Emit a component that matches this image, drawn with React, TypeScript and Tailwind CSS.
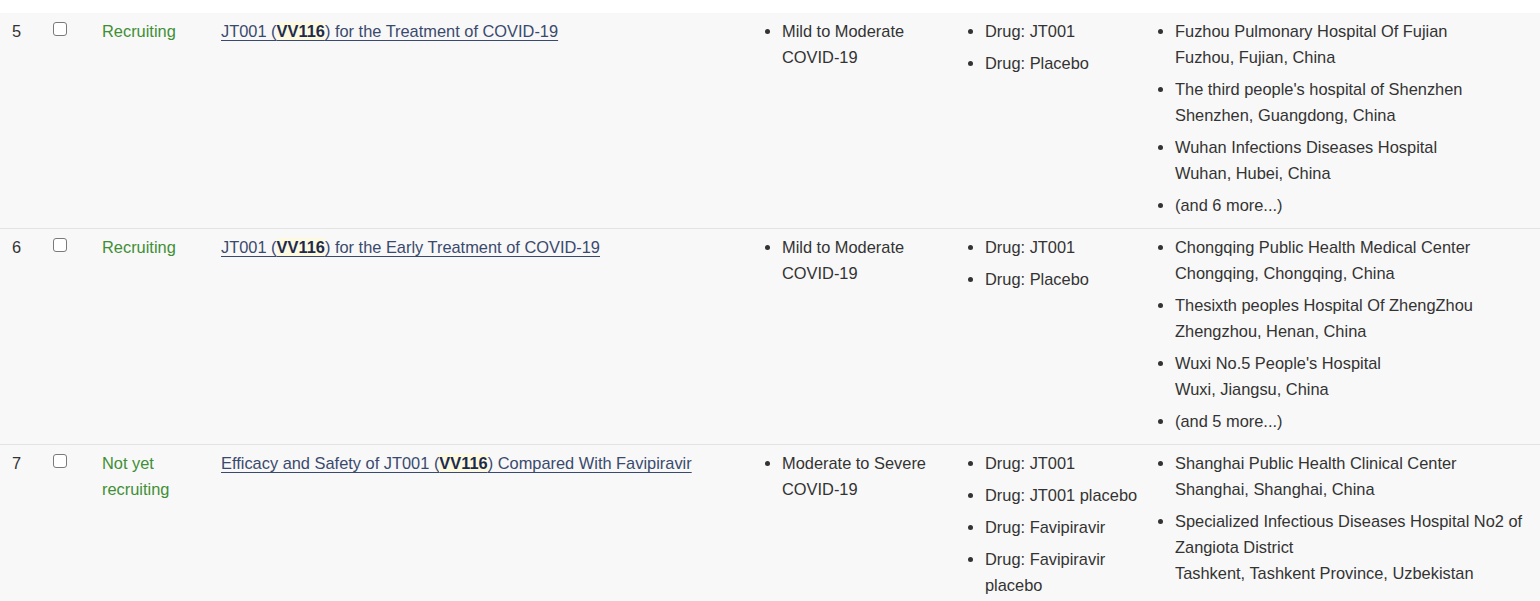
import React from "react";

interface Location {
  name: string;
  place?: string;
}

interface Study {
  num: number;
  status: string;
  before: string;
  after: string;
  conditions: string[];
  interventions: string[];
  locations: Location[];
}

const studies: Study[] = [
  {
    num: 5,
    status: "Recruiting",
    before: "JT001 (",
    after: ") for the Treatment of COVID-19",
    conditions: ["Mild to Moderate COVID-19"],
    interventions: ["Drug: JT001", "Drug: Placebo"],
    locations: [
      { name: "Fuzhou Pulmonary Hospital Of Fujian", place: "Fuzhou, Fujian, China" },
      { name: "The third people's hospital of Shenzhen", place: "Shenzhen, Guangdong, China" },
      { name: "Wuhan Infections Diseases Hospital", place: "Wuhan, Hubei, China" },
      { name: "(and 6 more...)" },
    ],
  },
  {
    num: 6,
    status: "Recruiting",
    before: "JT001 (",
    after: ") for the Early Treatment of COVID-19",
    conditions: ["Mild to Moderate COVID-19"],
    interventions: ["Drug: JT001", "Drug: Placebo"],
    locations: [
      { name: "Chongqing Public Health Medical Center", place: "Chongqing, Chongqing, China" },
      { name: "Thesixth peoples Hospital Of ZhengZhou", place: "Zhengzhou, Henan, China" },
      { name: "Wuxi No.5 People's Hospital", place: "Wuxi, Jiangsu, China" },
      { name: "(and 5 more...)" },
    ],
  },
  {
    num: 7,
    status: "Not yet recruiting",
    before: "Efficacy and Safety of JT001 (",
    after: ") Compared With Favipiravir",
    conditions: ["Moderate to Severe COVID-19"],
    interventions: ["Drug: JT001", "Drug: JT001 placebo", "Drug: Favipiravir", "Drug: Favipiravir placebo"],
    locations: [
      { name: "Shanghai Public Health Clinical Center", place: "Shanghai, Shanghai, China" },
      {
        name: "Specialized Infectious Diseases Hospital No2 of Zangiota District",
        place: "Tashkent, Tashkent Province, Uzbekistan",
      },
    ],
  },
];

const cell = "align-top pt-[5px] pb-[4px] leading-[26px]";

export default function App() {
  return (
    <div className="w-[1540px] bg-white font-['Liberation_Sans',Arial,sans-serif] text-[16.4px] text-[#333333]">
      <div className="h-[13px]" />
      <table className="w-[1540px] table-fixed border-collapse">
        <colgroup>
          <col className="w-[43px]" />
          <col className="w-[49px]" />
          <col className="w-[119px]" />
          <col className="w-[541px]" />
          <col className="w-[203px]" />
          <col className="w-[190px]" />
          <col className="w-[395px]" />
        </colgroup>
        <tbody>
          {studies.map((s) => (
            <tr key={s.num} className="bg-[#f8f8f8] border-b border-[#e3e3e3]">
              <td className={`${cell} pl-3`}>{s.num}</td>
              <td className={`${cell} pl-[10px]`}>
                <span className="mt-[4px] block h-[14px] w-[14px] rounded-[3px] border border-[#7a7a7a] bg-white" />
              </td>
              <td className={`${cell} pl-[10px] pr-2 text-[#3f8f36]`}>{s.status}</td>
              <td className={`${cell} pl-[10px] pr-2`}>
                <a href="#" className="text-[#3a4a6e] underline decoration-[#3a4a6e] underline-offset-[3px]">
                  {s.before}
                  <b className="bg-[#fdfae0] font-bold text-[#1d2b4c]">VV116</b>
                  {s.after}
                </a>
              </td>
              <td className={`${cell} pl-[10px] pr-2`}>
                <ul className="list-disc pl-5">
                  {s.conditions.map((c) => (
                    <li key={c} className="mb-[6px]">{c}</li>
                  ))}
                </ul>
              </td>
              <td className={`${cell} pl-[10px] pr-[4px]`}>
                <ul className="list-disc pl-5">
                  {s.interventions.map((d) => (
                    <li key={d} className="mb-[6px]">{d}</li>
                  ))}
                </ul>
              </td>
              <td className={`${cell} pl-[10px] pr-[10px]`}>
                <ul className="list-disc pl-5">
                  {s.locations.map((l) => (
                    <li key={l.name} className="mb-[6px]">
                      {l.name}
                      {l.place && (
                        <>
                          <br />
                          {l.place}
                        </>
                      )}
                    </li>
                  ))}
                </ul>
              </td>
            </tr>
          ))}
        </tbody>
      </table>
    </div>
  );
}
